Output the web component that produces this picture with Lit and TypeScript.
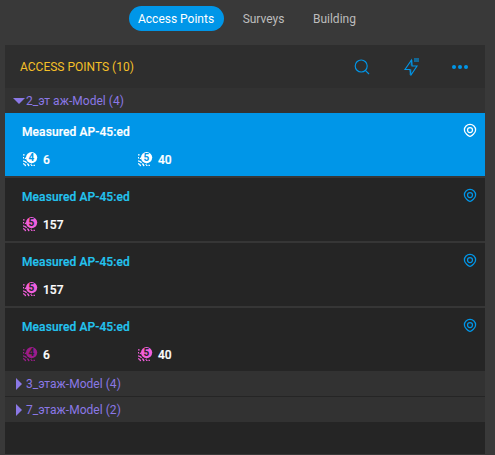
import { LitElement, html, svg, css } from "lit";
import { customElement, property, state } from "lit/decorators.js";
import { classMap } from "lit/directives/class-map.js";

interface Radio { band: 4 | 5; channel: number; dim?: boolean; }
interface AccessPoint { name: string; radios: Radio[]; }

@customElement("radio-badge")
class RadioBadge extends LitElement {
  @property({ type: Number }) band = 5;
  static styles = css`
    :host { display: block; width: 15px; height: 15px; }
    svg { display: block; }
    .digit { fill: var(--digit, #252525); font: 700 10px Roboto, sans-serif; text-anchor: middle; }
  `;
  render() {
    return html`<svg width="15" height="15" viewBox="0 0 15 15">
      <g fill="none" stroke="currentColor" stroke-width="1.4">
        <path d="M0 2.9h1.6M0 5.8h1M1.8 6.2l1.6.5M0 8.9q2.4.3 3.6 1.8M4.4 11.4q1.3 1.3 1.5 2.7M0 11.6q2.2.3 2.6 2.5M7.9 11.8l.5.9M8.8 13.1v1M11.2 12.7v1.4"/>
      </g>
      <circle cx="8.6" cy="5.6" r="5.6" fill="currentColor"/>
      ${svg`<text class="digit" x="8.4" y="9.1">${this.band}</text>`}
    </svg>`;
  }
}

@customElement("ap-card")
class ApCard extends LitElement {
  @property({ attribute: false }) ap!: AccessPoint;
  @property({ type: Boolean, reflect: true }) selected = false;
  static styles = css`
    :host {
      display: flex; flex-direction: column; box-sizing: border-box; height: 63px;
      padding: 11px 8px 0 17px; background: #252525; color: #23c4f0;
      font-weight: 500;
    }
    :host([selected]) { background: #0096e8; color: #fff; --digit: #0096e8; }
    .top { display: flex; justify-content: space-between; height: 16px; line-height: 16px; }
    .name { letter-spacing: 0.1px; -webkit-text-stroke: 0.2px currentColor; }
    .pin { display: block; margin-top: -1px; color: #0096e8; }
    .radios { display: flex; margin-top: 11px; padding-left: 1px; color: #fff; }
    .radio { display: flex; width: 115px; gap: 5px; line-height: 19px; -webkit-text-stroke: 0.2px currentColor; }
    radio-badge { margin: 1px 0 0 0; color: #f25fdc; -webkit-text-stroke: 0; }
    .dim { color: #9c1c8b; }
    :host([selected]) radio-badge, :host([selected]) .pin { color: #fff; }
  `;
  render() {
    return html`
      <div class="top">
        <span class="name">${this.ap.name}</span>
        <svg class="pin" width="14" height="15" viewBox="0 0 14 15" fill="none" stroke="currentColor" stroke-width="1.25">
          <path d="M7 13.5C5.5 12.9 1.4 10.4 1.4 6.9a5.6 5.6 0 0 1 11.2 0C12.6 10.4 8.5 12.9 7 13.5z"/>
          <circle cx="7" cy="7" r="2.5"/>
        </svg>
      </div>
      <div class="radios">
        ${this.ap.radios.map((r) => html`<div class="radio">
          <radio-badge class=${classMap({ dim: !!r.dim })} .band=${r.band}></radio-badge>
          <span>${r.channel}</span>
        </div>`)}
      </div>`;
  }
}

@customElement("app-root")
class AppRoot extends LitElement {
  @state() private tab = "Access Points";
  @state() private selected = 0;

  private tabs = ["Access Points", "Surveys", "Building"];
  private points: AccessPoint[] = [
    { name: "Measured AP-45:ed", radios: [{ band: 4, channel: 6 }, { band: 5, channel: 40 }] },
    { name: "Measured AP-45:ed", radios: [{ band: 5, channel: 157 }] },
    { name: "Measured AP-45:ed", radios: [{ band: 5, channel: 157 }] },
    { name: "Measured AP-45:ed", radios: [{ band: 4, channel: 6, dim: true }, { band: 5, channel: 40 }] },
  ];

  static styles = css`
    :host {
      display: flex; flex-direction: column; box-sizing: border-box; height: 455px;
      padding: 6px 10px 1px 5px; background: #393939; overflow: hidden;
      font: 400 12px Roboto, sans-serif;
    }
    .tabs { display: flex; gap: 10px; height: 25px; margin: 0 0 14px 124px; }
    .tab {
      height: 25px; padding: 0 9.5px 0 9px; border-radius: 13px; line-height: 26px;
      color: #bdbdbd; white-space: nowrap;
    }
    .active { background: #0096e8; color: #fff; }
    .panel { flex: 1; background: #252525; }
    .header {
      display: flex; align-items: center; height: 43px; padding: 0 17px 0 15px;
      background: #2e2e2e; color: #f5c028;
    }
    .title { flex: 1; }
    .tool { display: block; color: #0096e8; }
    .bolt { margin: 0 32px 0 33px; }
    .group {
      display: flex; align-items: center; height: 25px; padding-left: 8px;
      background: #323232; color: #8b78e6; letter-spacing: 0.04px;
    }
    .group + .group { margin-top: 1px; }
    .arrow { width: 13px; flex: none; }
    .cards { display: flex; flex-direction: column; gap: 2px; background: #363636; }
  `;

  private group(label: string, open = false) {
    return html`<div class="group">
      <svg class="arrow" width="13" height="14" viewBox="0 0 13 14" fill="currentColor">
        <path d=${open ? "M0 4h12L6 10z" : "M3 1v12l6-6z"} />
      </svg>
      <span>${label}</span>
    </div>`;
  }

  render() {
    return html`
      <div class="tabs">
        ${this.tabs.map((t) => html`<div class=${classMap({ tab: true, active: t === this.tab })}
          @click=${() => (this.tab = t)}>${t}</div>`)}
      </div>
      <div class="panel">
        <div class="header">
          <span class="title">ACCESS POINTS (10)</span>
          <svg class="tool" width="16" height="16" viewBox="0 0 16 16" fill="none" stroke="currentColor" stroke-width="1.15">
            <circle cx="7.2" cy="7" r="6"/><path d="M11.3 11.3L15 15"/>
          </svg>
          <svg class="tool bolt" width="17" height="18" viewBox="0 0 17 18" fill="none" stroke="currentColor" stroke-width="1.1">
            <path d="M8.5 2L2 11.5h5L8 17l6-9H9z"/>
            <path d="M8.5 2v5.5M7.5 11.5V17" stroke-width="2" stroke-opacity=".5"/>
            <path d="M11 0h5v4h-5z" fill="currentColor" stroke="none" opacity=".55"/>
          </svg>
          <svg class="tool" width="16" height="4" viewBox="0 0 16 4" fill="currentColor">
            <circle cx="2" cy="2" r="2"/><circle cx="8" cy="2" r="2"/><circle cx="14" cy="2" r="2"/>
          </svg>
        </div>
        ${this.group("2_эт аж-Model (4)", true)}
        <div class="cards">
          ${this.points.map((p, i) => html`<ap-card .ap=${p} ?selected=${i === this.selected}
            @click=${() => (this.selected = i)}></ap-card>`)}
        </div>
        ${this.group("3_этаж-Model (4)")}
        ${this.group("7_этаж-Model (2)")}
      </div>`;
  }
}
